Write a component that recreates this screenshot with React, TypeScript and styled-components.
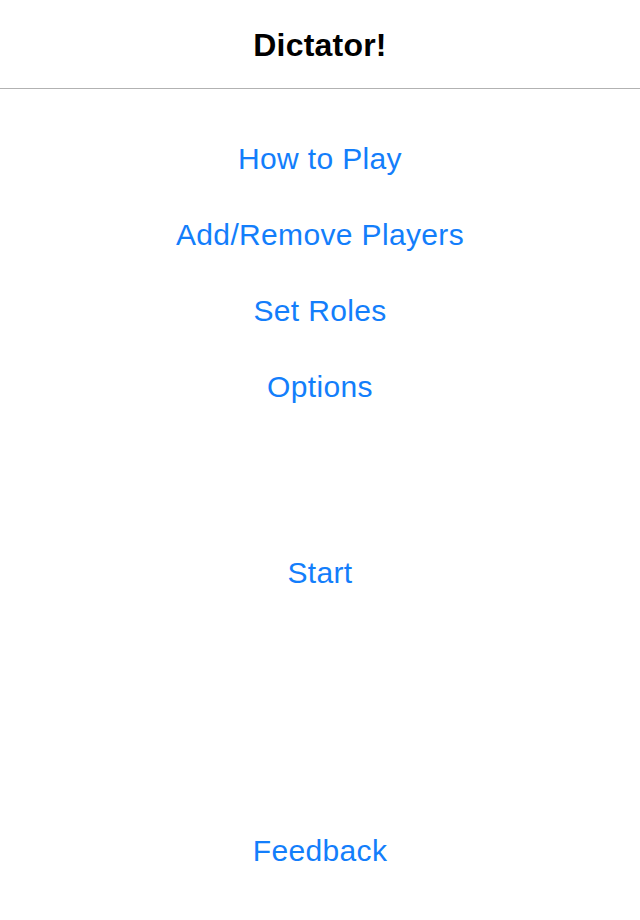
import styled, { createGlobalStyle } from 'styled-components';

const GlobalStyle = createGlobalStyle`
  html, body {
    margin: 0;
    padding: 0;
    background: #ffffff;
  }
  body {
    font-family: 'Liberation Sans', Arial, sans-serif;
  }
`;

const Screen = styled.div`
  min-height: 920px;
  display: flex;
  flex-direction: column;
  background: #ffffff;
`;

const Header = styled.header`
  height: 88px;
  display: flex;
  align-items: center;
  justify-content: center;
  border-bottom: 1px solid #b2b2b2;
`;

const Title = styled.h1`
  margin: 0;
  font-size: 32px;
  font-weight: 700;
  letter-spacing: 0.2px;
  color: #000000;
  padding-top: 2px;
`;

const Menu = styled.nav`
  display: flex;
  flex-direction: column;
  padding-top: 32px;
`;

const MenuButton = styled.button<{ gap?: number }>`
  height: 76px;
  line-height: 76px;
  margin-top: ${(props) => props.gap || 0}px;
  padding: 0;
  border: none;
  background: none;
  font-family: 'Liberation Sans', Arial, sans-serif;
  font-size: 30px;
  letter-spacing: 0.35px;
  color: #137efb;
  text-align: center;
  cursor: pointer;
`;

const Footer = styled.div`
  margin-top: auto;
  display: flex;
  flex-direction: column;
  padding-bottom: 31px;
`;

const items = ['How to Play', 'Add/Remove Players', 'Set Roles', 'Options'];

function App() {
  return (
    <Screen>
      <GlobalStyle />
      <Header>
        <Title>Dictator!</Title>
      </Header>
      <Menu>
        {items.map((label) => (
          <MenuButton key={label}>{label}</MenuButton>
        ))}
        <MenuButton gap={110}>Start</MenuButton>
      </Menu>
      <Footer>
        <MenuButton>Feedback</MenuButton>
      </Footer>
    </Screen>
  );
}

export default App;
